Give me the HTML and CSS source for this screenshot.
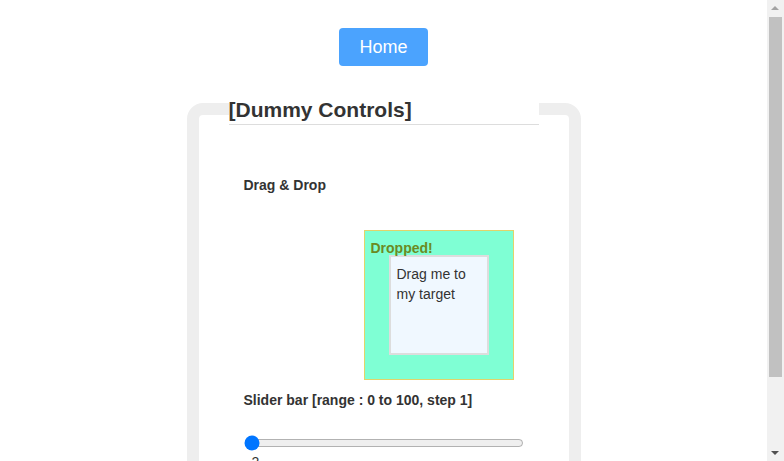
FILE: index.html
```html
<!DOCTYPE html>
<html lang="en">
<head>
<meta charset="utf-8">
<title>Dummy Controls</title>
<link rel="stylesheet" href="styles.css">
</head>
<body>
<nav class="topnav">
  <a class="home-btn" href="#">Home</a>
</nav>
<section class="panel">
  <h2 class="panel-title">[Dummy Controls]</h2>
  <div class="panel-body">
    <div class="control">
      <h3 class="control-label">Drag &amp; Drop</h3>
      <div class="drop-zone">
        <p class="drop-status">Dropped!</p>
        <div class="draggable" draggable="true">Drag me to my target</div>
      </div>
    </div>
    <div class="control">
      <h3 class="control-label slider-label">Slider bar [range : 0 to 100, step 1]</h3>
      <input class="slider" type="range" min="0" max="100" step="1" value="0">
      <div class="slider-value">2</div>
    </div>
  </div>
</section>
<div class="scrollbar" aria-hidden="true">
  <span class="sb-arrow sb-up"></span>
  <span class="sb-thumb"></span>
  <span class="sb-arrow sb-down"></span>
</div>
</body>
</html>
```
FILE: styles.css
```css
html, body {
  margin: 0;
  padding: 0;
  background: #ffffff;
}

body {
  font-family: "Liberation Sans", Arial, sans-serif;
  color: #333333;
  font-size: 14px;
  margin-right: 17px;
}

.topnav {
  display: flex;
  justify-content: center;
  padding-top: 28px;
}

.home-btn {
  display: block;
  width: 89px;
  box-sizing: border-box;
  padding: 9px 0;
  line-height: 20px;
  font-size: 18px;
  text-align: center;
  color: #ffffff;
  background: #4ba3fe;
  border-radius: 4px;
  text-decoration: none;
}

.panel {
  width: 394px;
  box-sizing: border-box;
  margin: 37px auto 20px;
  border: 12px solid #eeeeee;
  border-radius: 16px;
  padding: 0 30px 45px;
}

.panel-title {
  margin: -17px 0 0;
  width: 310px;
  padding: 0 0 2px;
  font-size: 21px;
  line-height: 24px;
  font-weight: bold;
  background: #ffffff;
  border-bottom: 1px solid #dddddd;
  color: #333333;
}

.panel-body {
  padding: 0 15px;
}

.control-label {
  margin: 52px 0 0;
  font-size: 14px;
  line-height: 16px;
  font-weight: bold;
}

.drop-zone {
  margin: 37px 0 0 120px;
  width: 150px;
  height: 150px;
  box-sizing: border-box;
  border: 1px solid #e2d36a;
  background: #7fffd4;
  padding-top: 10px;
}

.drop-status {
  margin: 0;
  padding-left: 6px;
  font-weight: bold;
  line-height: 14px;
  color: #6b8a22;
}

.draggable {
  width: 100px;
  height: 100px;
  box-sizing: border-box;
  margin: 0 auto;
  border: 2px solid #dddddd;
  background: #f0f8ff;
  padding: 8px 6px 6px;
  line-height: 19.6px;
  color: #333333;
}

.slider-label {
  margin-top: 12px;
}

.slider {
  display: block;
  width: 100%;
  height: 16px;
  margin: 27px 0 0;
}

.slider-value {
  margin-top: 3px;
  padding-left: 8px;
  line-height: 16px;
}

/* window scrollbar drawn over the right edge */
.scrollbar {
  position: fixed;
  top: 0;
  right: 0;
  bottom: 0;
  width: 17px;
  background: #f1f1f1;
}

.sb-thumb {
  position: absolute;
  left: 2px;
  right: 2px;
  top: 17px;
  height: 360px;
  background: #c1c1c1;
}

.sb-arrow {
  position: absolute;
  left: 4px;
  width: 0;
  height: 0;
  border-left: 4px solid transparent;
  border-right: 4px solid transparent;
}

.sb-up {
  top: 6px;
  border-bottom: 4px solid #a3a3a3;
}

.sb-down {
  bottom: 6px;
  border-top: 4px solid #505050;
}
```
